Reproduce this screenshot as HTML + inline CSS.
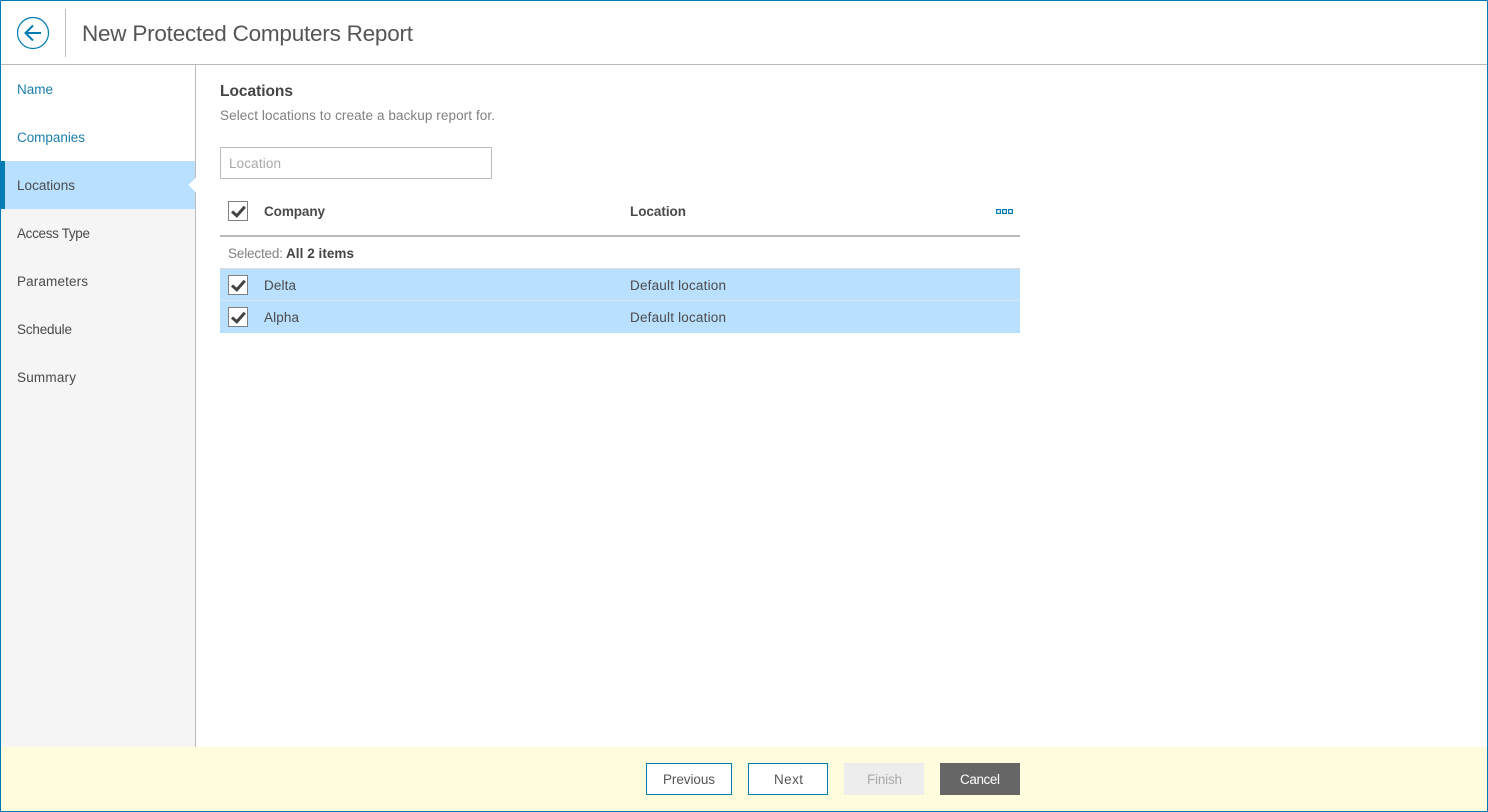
<!DOCTYPE html>
<html lang="en">
<head>
<meta charset="utf-8">
<title>New Protected Computers Report</title>
<style>
html,body{margin:0;padding:0;width:1488px;height:812px;overflow:hidden;background:#fff}
svg{display:block}
text{font-family:"Liberation Sans",sans-serif;font-size:13.5px;fill:#555}
.b{font-weight:700}
.nav{fill:#4a4a4a}
.lnk{fill:#1a7fab}
</style>
</head>
<body>
<svg width="1488" height="812" viewBox="0 0 1488 812" xmlns="http://www.w3.org/2000/svg">
  <rect width="1488" height="812" fill="#fff"/>
  <!-- sidebar -->
  <rect x="1" y="209" width="194" height="538" fill="#f5f5f5"/>
  <rect x="1" y="161" width="194" height="48" fill="#b9e0ff"/>
  <rect x="1" y="161" width="4" height="48" fill="#007cb5"/>
  <rect x="195" y="65" width="1" height="682" fill="#bbb"/>
  <path d="M196 177.500L188.500 185L196 192.500Z" fill="#fff"/>
  <!-- header -->
  <rect x="1" y="64" width="1486" height="1" fill="#bbb"/>
  <rect x="65" y="9" width="1" height="48" fill="#bbb"/>
  <circle cx="33" cy="33" r="15.500" fill="none" stroke="#007cb5" stroke-width="1.200"/>
  <path d="M25.500 33H41M33 25.500L25.500 33L33 40.500" fill="none" stroke="#007cb5" stroke-width="2"/>
  <text x="82" y="41" textLength="331" style="font-size:22.500px">New Protected Computers Report</text>
  <!-- nav -->
  <text class="lnk" x="17" y="94" textLength="36">Name</text>
  <text class="lnk" x="17" y="142" textLength="68">Companies</text>
  <text class="nav" x="17" y="190" textLength="58">Locations</text>
  <text class="nav" x="17" y="238" textLength="73">Access Type</text>
  <text class="nav" x="17" y="286" textLength="71">Parameters</text>
  <text class="nav" x="17" y="334" textLength="55">Schedule</text>
  <text class="nav" x="17" y="382" textLength="59">Summary</text>
  <!-- content -->
  <text class="b" x="220" y="96" textLength="73" style="font-size:15.500px;fill:#444">Locations</text>
  <text x="220" y="120" textLength="275" style="fill:#808080">Select locations to create a backup report for.</text>
  <rect x="220.500" y="147.500" width="271" height="31" fill="#fff" stroke="#bbb"/>
  <text x="229" y="168" textLength="52" style="fill:#a8a8a8">Location</text>
  <!-- table header -->
  <rect x="228.500" y="201.500" width="19" height="19" fill="#fff" stroke="#808080"/>
  <path d="M232 211.500L236.800 215.800L244.800 206.800" fill="none" stroke="#444" stroke-width="3"/>
  <text class="b" x="264" y="216" textLength="61" style="font-size:13.500px;fill:#4a4a4a">Company</text>
  <text class="b" x="630" y="216" textLength="56" style="font-size:13.500px;fill:#4a4a4a">Location</text>
  <rect x="996.600" y="209.600" width="3.800" height="3.800" fill="none" stroke="#007cb5" stroke-width="1.200"/>
  <rect x="1002.600" y="209.600" width="3.800" height="3.800" fill="none" stroke="#007cb5" stroke-width="1.200"/>
  <rect x="1008.600" y="209.600" width="3.800" height="3.800" fill="none" stroke="#007cb5" stroke-width="1.200"/>
  <rect x="220" y="235" width="800" height="2" fill="#bbb"/>
  <text x="228" y="258" textLength="55" style="fill:#808080">Selected:</text>
  <text class="b" x="286" y="258" textLength="68" style="font-size:13.500px;fill:#444">All 2 items</text>
  <!-- rows -->
  <rect x="220" y="268" width="800" height="1" fill="#ddd"/>
  <rect x="220" y="269" width="800" height="64" fill="#b9e0ff"/>
  <rect x="220" y="300" width="800" height="1" fill="#d8e4ee"/>
  <rect x="228.500" y="275.500" width="19" height="19" fill="#fff" stroke="#808080"/>
  <path d="M232 285.500L236.800 289.800L244.800 280.800" fill="none" stroke="#444" stroke-width="3"/>
  <text class="nav" x="264" y="290" textLength="32">Delta</text>
  <text class="nav" x="630" y="290" textLength="96">Default location</text>
  <rect x="228.500" y="307.500" width="19" height="19" fill="#fff" stroke="#808080"/>
  <path d="M232 317.500L236.800 321.800L244.800 312.800" fill="none" stroke="#444" stroke-width="3"/>
  <text class="nav" x="264" y="322" textLength="35">Alpha</text>
  <text class="nav" x="630" y="322" textLength="96">Default location</text>
  <!-- footer -->
  <rect x="1" y="747" width="1486" height="64" fill="#fffbdd"/>
  <rect x="646.500" y="763.500" width="85" height="31" fill="#fff" stroke="#007cb0"/>
  <text x="663" y="784" textLength="52">Previous</text>
  <rect x="748.500" y="763.500" width="79" height="31" fill="#fff" stroke="#007cb0"/>
  <text x="774" y="784" textLength="29">Next</text>
  <rect x="844" y="763" width="80" height="32" fill="#ededed"/>
  <text x="867" y="784" textLength="35" style="fill:#aaa">Finish</text>
  <rect x="940" y="763" width="80" height="32" fill="#666"/>
  <text x="960" y="784" textLength="40" style="fill:#fff">Cancel</text>
  <!-- window border -->
  <rect x="0.500" y="0.500" width="1487" height="811" fill="none" stroke="#007cb5"/>
</svg>
</body>
</html>
